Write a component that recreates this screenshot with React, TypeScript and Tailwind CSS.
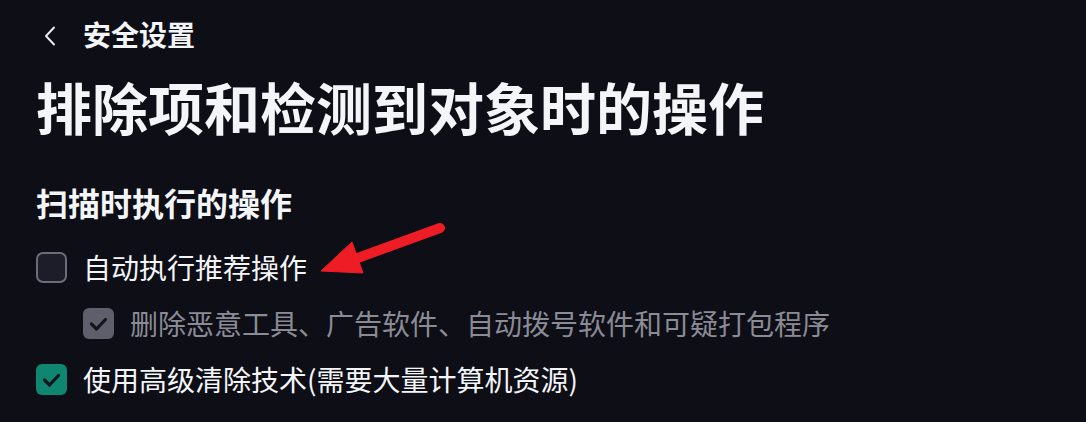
import React from 'react';

const font = { fontFamily: '"Noto Sans CJK SC", "Noto Sans", sans-serif' };

const CheckMark = () => (
    <svg width="31" height="31" viewBox="0 0 31 31" fill="none">
        <path d="M8.5 16 L13.5 21 L22.5 11.5" stroke="#15151d" strokeWidth="3.2" strokeLinecap="round" strokeLinejoin="round" />
    </svg>
);

const Box = ({ state }: { state: 'off' | 'muted' | 'on' }) => {
    if (state === 'off') {
        return <div className="w-[31px] h-[31px] shrink-0 rounded-[7px] border-[2.5px] border-[#6c6c78] bg-[#1d1c29]" />;
    }
    return (
        <div className={`w-[31px] h-[31px] shrink-0 rounded-[6px] ${state === 'on' ? 'bg-[#0f8770]' : 'bg-[#5f5f6b]'}`}>
            <CheckMark />
        </div>
    );
};

export default function App() {
    return (
        <div className="relative w-[1086px] h-[422px] overflow-hidden bg-[#0d0e16] text-[#f4f5f8]" style={font}>
            <div className="pl-9 pt-[14px]">
                {/* header */}
                <div className="flex items-center h-10">
                    <svg width="14" height="22" viewBox="0 0 14 22" className="ml-[7px] mt-[3px]" fill="none">
                        <path d="M11 2.5 L3 11 L11 19.5" stroke="#e8e9ee" strokeWidth="2" strokeLinecap="round" strokeLinejoin="round" />
                    </svg>
                    <span className="ml-[26px] text-[28px] font-bold leading-10">安全设置</span>
                </div>

                <h1 className="mt-5 text-[56px] font-bold leading-[64px]">排除项和检测到对象时的操作</h1>

                <h2 className="mt-[44px] text-[32px] font-bold leading-10">扫描时执行的操作</h2>

                <div className="mt-[17px] flex flex-col">
                    <div className="flex items-center h-14 gap-4">
                        <Box state="off" />
                        <span className="text-[28px] leading-10">自动执行推荐操作</span>
                    </div>
                    <div className="flex items-center h-14 gap-4 pl-[47px]">
                        <Box state="muted" />
                        <span className="text-[28px] leading-10 text-[#8b8b95]">删除恶意工具、广告软件、自动拨号软件和可疑打包程序</span>
                    </div>
                    <div className="flex items-center h-14 gap-4">
                        <Box state="on" />
                        <span className="text-[28px] leading-10">使用高级清除技术(需要大量计算机资源)</span>
                    </div>
                </div>
            </div>

            {/* red annotation arrow */}
            <svg className="absolute left-0 top-0 pointer-events-none" width="1086" height="422" viewBox="0 0 1086 422" fill="none">
                <path d="M440 228 L355 259" stroke="#ee1d25" strokeWidth="10" strokeLinecap="round" />
                <path d="M321 271 L352 242 L363 273 Z" fill="#ee1d25" stroke="#ee1d25" strokeWidth="1" strokeLinejoin="round" />
            </svg>
        </div>
    );
}
